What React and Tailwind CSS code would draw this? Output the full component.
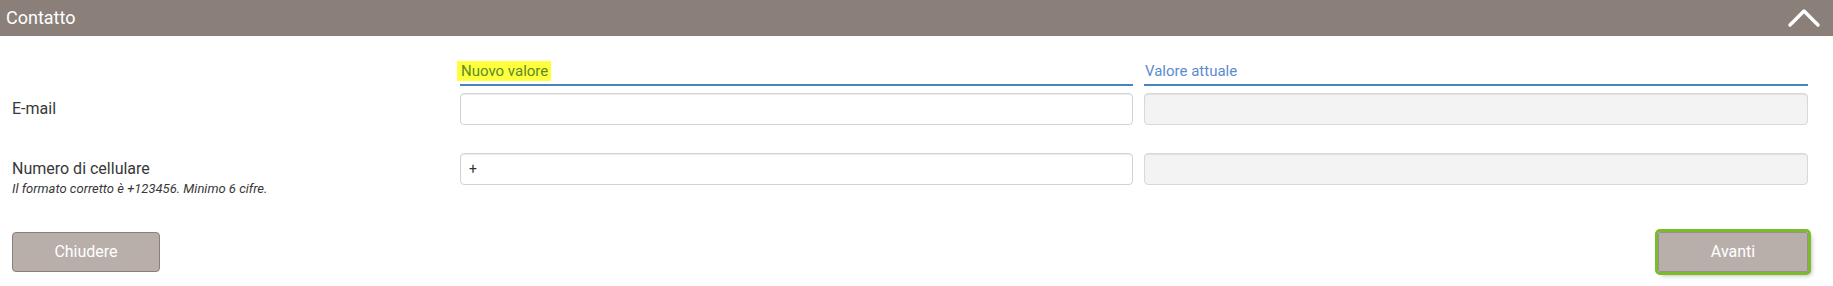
import React from "react";

export default function App() {
  return (
    <div className="w-full bg-white font-['Roboto','Liberation_Sans',sans-serif] text-[#383838]">
      {/* barra titolo */}
      <div className="h-[36px] bg-[#8a7f79] flex items-center justify-between pl-[6px] pr-[11px]">
        <span className="text-white text-[18px] leading-[20px]">Contatto</span>
        <svg width="36" height="22" viewBox="0 0 36 22" fill="none">
          <polyline
            points="4,18 18,4 32,18"
            stroke="white"
            strokeWidth="3.5"
            strokeLinecap="round"
            strokeLinejoin="round"
          />
        </svg>
      </div>

      <div className="pl-[12px] pr-[25px] pt-[25px] pb-[13px]">
        <div className="grid grid-cols-[437px_673px_664px] gap-x-[11px]">
          {/* intestazioni colonne */}
          <div />
          <div className="flex border-b-2 border-[#4a84be] pb-[3px]">
            <span className="-ml-[3px] block bg-[#ffff3d] pl-[4px] pr-[3px] pt-[1px] text-[15px] leading-[19px] text-[#5a8a2c]">
              Nuovo valore
            </span>
          </div>
          <div className="flex border-b-2 border-[#4a84be] pb-[3px]">
            <span className="block pl-[1px] pt-[1px] text-[15px] leading-[19px] text-[#5b8bcf]">
              Valore attuale
            </span>
          </div>

          {/* E-mail */}
          <div className="mt-[7px] flex items-center text-[16px] leading-[20px]">
            E-mail
          </div>
          <input
            type="text"
            className="mt-[7px] block h-[32px] w-full rounded-[4px] border border-[#d2d2d2] bg-white px-[9px] text-[14px] shadow-[inset_0_1px_1px_rgba(0,0,0,0.075)] outline-none"
          />
          <input
            type="text"
            disabled
            className="mt-[7px] block h-[32px] w-full rounded-[4px] border border-[#d8d8d8] bg-[#f3f3f3] px-[9px] text-[14px] shadow-[inset_0_1px_1px_rgba(0,0,0,0.075)] outline-none"
          />

          {/* Numero di cellulare */}
          <div className="mt-[28px] pt-[6px]">
            <div className="text-[16px] leading-[20px]">Numero di cellulare</div>
            <div className="text-[13px] italic leading-[20px]">
              Il formato corretto è +123456. Minimo 6 cifre.
            </div>
          </div>
          <input
            type="text"
            defaultValue="+"
            className="mt-[28px] block h-[32px] w-full rounded-[4px] border border-[#d2d2d2] bg-white px-[8px] text-[14px] text-[#333] shadow-[inset_0_1px_1px_rgba(0,0,0,0.075)] outline-none"
          />
          <input
            type="text"
            disabled
            className="mt-[28px] block h-[32px] w-full rounded-[4px] border border-[#d8d8d8] bg-[#f3f3f3] px-[9px] text-[14px] shadow-[inset_0_1px_1px_rgba(0,0,0,0.075)] outline-none"
          />
        </div>

        {/* pulsanti */}
        <div className="mt-[33px] flex items-center justify-between">
          <button className="h-[40px] w-[148px] rounded-[4px] border border-[#8a7f79] bg-[#b8afab] text-[16px] text-white">
            Chiudere
          </button>
          <button className="h-[40px] w-[150px] rounded-[2px] border border-[#9a908b] bg-[#b8afab] text-[16px] text-white outline-3 outline-solid outline-[#7cbb2b] shadow-[3px_3px_5px_rgba(0,0,0,0.35)]">
            Avanti
          </button>
        </div>
      </div>
    </div>
  );
}
